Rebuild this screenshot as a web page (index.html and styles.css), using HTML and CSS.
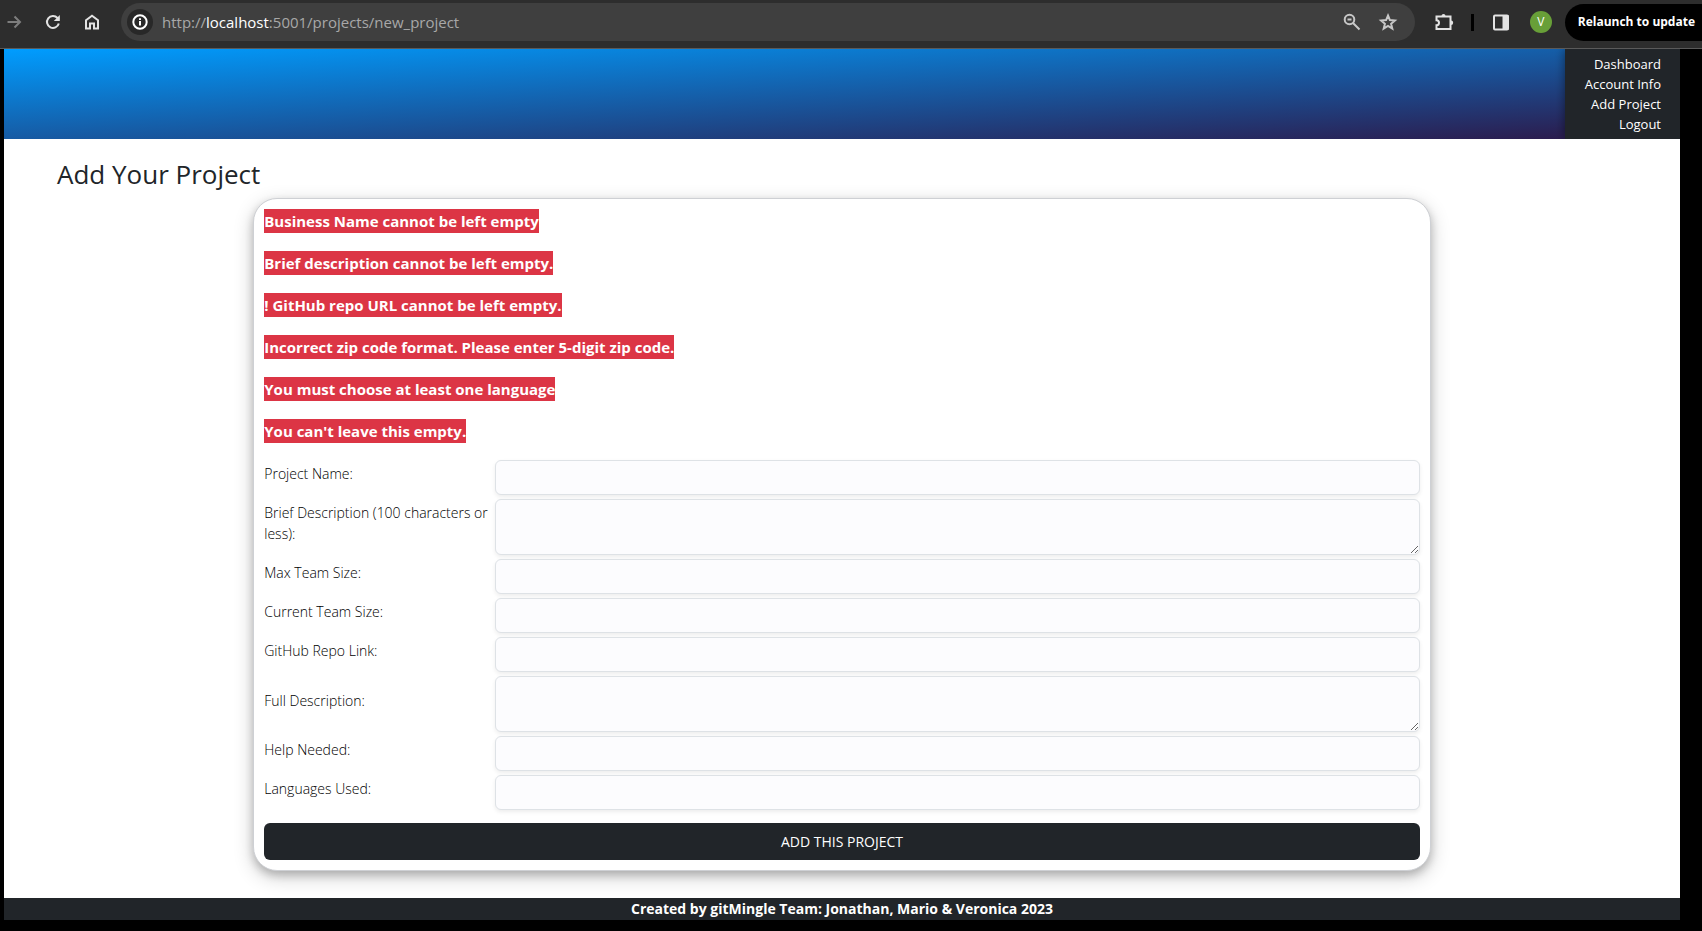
FILE: index.html
```html
<!DOCTYPE html>
<html lang="en">
<head>
<meta charset="utf-8">
<title>Add Your Project</title>
<link rel="stylesheet" href="styles.css">
</head>
<body>
<div class="toolbar">
  <button class="tool tool-dim" aria-label="Forward"><svg width="20" height="20" viewBox="0 0 20 20"><path d="M3.500 10H16M10.500 4.500 16 10l-5.500 5.500"/></svg></button>
  <button class="tool" aria-label="Reload"><svg width="20" height="20" viewBox="0 0 20 20"><path d="M15.800 11.500A6 6 0 1 1 14.500 6l1.300 1.400"/><path class="solid" d="M16.800 3v6h-6z"/></svg></button>
  <button class="tool" aria-label="Home"><svg width="20" height="20" viewBox="0 0 20 20"><path d="M4 8.200 10 3.700l6 4.500V16.500h-4v-5H8v5H4z"/></svg></button>
  <div class="address">
    <button class="info" aria-label="Site information"><svg width="20" height="20" viewBox="0 0 20 20"><circle cx="10" cy="10" r="6.700"/><path d="M10 9v4.500M10 6.200v1.800"/></svg></button>
    <div class="url">http://<span class="host">localhost</span>:5001/projects/new_project</div>
    <button class="tool" aria-label="Zoom"><svg width="20" height="20" viewBox="0 0 20 20"><circle cx="7.500" cy="7.500" r="4.800"/><path d="M11 11l6.500 6.500M5.500 7.500h4"/></svg></button>
    <button class="tool" aria-label="Bookmark"><svg width="20" height="20" viewBox="0 0 20 20"><path d="M10 3.500l1.900 4.600 5 .4-3.800 3.300 1.200 4.800L10 14l-4.300 2.600 1.200-4.800-3.800-3.300 5-.4z"/></svg></button>
  </div>
  <button class="tool" aria-label="Extensions"><svg width="20" height="20" viewBox="0 0 20 20"><path d="M2.500 4.500h14v12.500h-14v-3.700a2.500 2.500 0 0 0 0-5z"/><path class="solid" d="M7.500 4a2 2 0 0 1 4 0zM17 8.500a2.200 2.200 0 0 1 0 4.400z"/></svg></button>
  <span class="divider"></span>
  <button class="tool" aria-label="Side panel"><svg width="20" height="20" viewBox="0 0 20 20"><rect x="3" y="3.500" width="14" height="14" rx="1"/><path class="solid" d="M11.500 3h6v15h-6z"/></svg></button>
  <button class="avatar">V</button>
  <button class="relaunch">Relaunch to update</button>
</div>
<div class="page">
  <header class="banner">
    <nav class="menu">
      <a href="#">Dashboard</a>
      <a href="#">Account Info</a>
      <a href="#">Add Project</a>
      <a href="#">Logout</a>
    </nav>
  </header>
  <main class="content">
    <h1 class="title">Add Your Project</h1>
    <form class="card">
      <p class="error"><span>Business Name cannot be left empty</span></p>
      <p class="error"><span>Brief description cannot be left empty.</span></p>
      <p class="error"><span>! GitHub repo URL cannot be left empty.</span></p>
      <p class="error"><span>Incorrect zip code format. Please enter 5-digit zip code.</span></p>
      <p class="error"><span>You must choose at least one language</span></p>
      <p class="error"><span>You can't leave this empty.</span></p>
      <div class="fields">
        <label for="name">Project Name:</label><input id="name" type="text">
        <label for="brief">Brief Description (100 characters or less):</label><textarea id="brief"></textarea>
        <label for="max">Max Team Size:</label><input id="max" type="text">
        <label for="current">Current Team Size:</label><input id="current" type="text">
        <label for="repo">GitHub Repo Link:</label><input id="repo" type="text">
        <label for="full">Full Description:</label><textarea id="full"></textarea>
        <label for="help">Help Needed:</label><input id="help" type="text">
        <label for="languages">Languages Used:</label><input id="languages" type="text">
      </div>
      <button class="submit" type="submit">ADD THIS PROJECT</button>
    </form>
  </main>
  <footer class="credits">Created by gitMingle Team: Jonathan, Mario &amp; Veronica 2023</footer>
</div>
</body>
</html>
```

FILE: styles.css
```css
* { box-sizing: border-box; }
body {
  margin: 0;
  background: #000;
  color: #212529;
  font: 14px/20px "Open Sans", "Noto Sans", sans-serif;
}
button, input, textarea { font: inherit; }
button { border: 0; padding: 0; background: none; color: inherit; }
svg { display: block; fill: none; stroke: currentColor; stroke-width: 2; }
.solid { fill: currentColor; stroke: none; }

.toolbar {
  display: flex;
  align-items: center;
  height: 49px;
  padding: 0 0 4px 4px;
  border-bottom: 1px solid #5a5a5a;
  background: #2d2d2d;
  color: #e3e3e3;
  gap: 19px;
}
.tool-dim { color: #7d7d7d; }
.address {
  display: flex;
  flex: 1;
  align-items: center;
  gap: 16px;
  height: 38px;
  padding: 0 17px 0 6px;
  border-radius: 19px;
  background: #3f3f3f;
  color: #c7c7c7;
}
.info {
  display: grid;
  place-items: center;
  width: 26px;
  height: 26px;
  border-radius: 50%;
  background: #282828;
  color: #fff;
}
.url { flex: 1; margin-left: -7px; color: #a8a8a8; font-size: 15px; }
.host { color: #fff; }
.divider { width: 3px; height: 17px; margin: 0 -2px; background: #000; }
.avatar {
  width: 22px;
  height: 22px;
  border-radius: 50%;
  background: #689f38;
  color: #fff;
  font-size: 12px;
}
.relaunch {
  height: 37px;
  margin-left: -6px;
  padding: 0 7px 0 13px;
  border-radius: 19px 0 0 19px;
  background: #000;
  color: #fff;
  font-size: 12px;
  font-weight: 700;
}

.page { margin: 0 22px 11px 4px; background: #fff; }
.banner {
  display: flex;
  justify-content: flex-end;
  background: linear-gradient(to bottom right, #009dff, #2d1848);
}
.menu {
  display: flex;
  flex-direction: column;
  align-items: flex-end;
  padding: 5px 19px 5px 20px;
  background: #212529;
  box-shadow: 0 0 10px rgba(0, 0, 0, 0.5);
  clip-path: inset(0 0 0 -20px);
  font-size: 13px;
}
.menu a { color: #fff; text-decoration: none; }

.content { padding: 18px 53px 27px; }
.title { margin: 0 0 7px; font-size: 26px; font-weight: 500; line-height: 34px; }
.card {
  width: 75%;
  margin: 0 auto;
  padding: 10px;
  border: 1px solid #ced0d4;
  border-radius: 24px;
  background: #fff;
  box-shadow: 0 4px 8px rgba(0, 0, 0, 0.2), 0 6px 20px rgba(0, 0, 0, 0.2);
}
.error { margin: 0 0 18px; color: #fff; font-size: 15px; font-weight: 700; line-height: 24px; }
.error span { display: inline-block; background: #dc3545; }
.fields {
  display: grid;
  grid-template-columns: 1fr 4fr;
  align-items: center;
  row-gap: 4px;
  margin-top: 17px;
}
.error:nth-last-of-type(1) { margin-bottom: 17px; }
.fields label { padding-bottom: 8px; color: #000; font-weight: 300; line-height: 21px; }
.fields input, .fields textarea {
  display: block;
  width: 100%;
  height: 35px;
  padding: 6px 12px;
  border: 1px solid #dee2e6;
  border-radius: 6px;
  background: #fcfcfe;
  box-shadow: 0 2px 4px rgba(0, 0, 0, 0.075);
}
.fields textarea { height: 56px; resize: vertical; }
.submit {
  width: 100%;
  height: 37px;
  margin-top: 13px;
  border-radius: 6px;
  background: #212529;
  color: #fff;
}
.credits {
  background: #212529;
  color: #fff;
  font-weight: 700;
  line-height: 22px;
  text-align: center;
}
```
